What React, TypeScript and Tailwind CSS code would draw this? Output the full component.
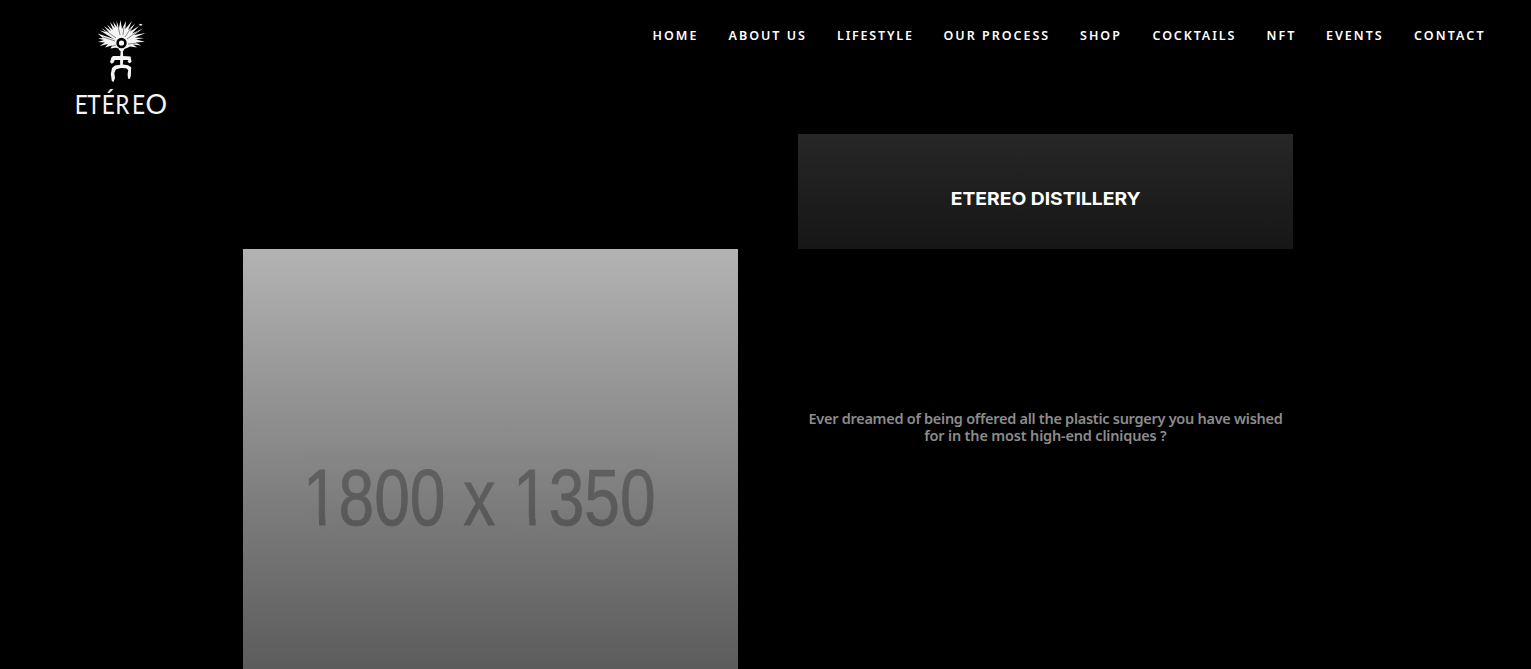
import React from "react";

const links = [
  { label: "HOME", cls: "w-[76px]" },
  { label: "ABOUT US", cls: "w-[108.5px]" },
  { label: "LIFESTYLE", cls: "w-[106.5px] tracking-[1.8px]" },
  { label: "OUR PROCESS", cls: "w-[136.5px]" },
  { label: "SHOP", cls: "w-[72.5px]" },
  { label: "COCKTAILS", cls: "w-[114px] tracking-[1.9px]" },
  { label: "NFT", cls: "w-[59.5px]" },
  { label: "EVENTS", cls: "w-[88px]" },
  { label: "CONTACT", cls: "w-[74px] tracking-[2.1px]" },
];

function Logo() {
  return (
    <svg className="block h-[106px] w-[106px] shrink-0" viewBox="69 18 106 106" fill="#f4f4f4">
      {/* feathers */}
      <path d="M117 40 L97.5 33.5 L103 38 L98 38.5 L104 40 L98 42 L105 42.5 L99.5 46 L108 44 L105 47.5 L112 45.5 L110.5 48.5 L117 47.5 Z" />
      <path d="M117 41 L100 30.5 L106 32 L101 28 L109 32.5 L104 26 L111 31 L107 24.5 L113 30 L110 22 L115 28 L113 21.5 L117 27 L116.5 20.5 L119 28 L120.5 20 L122 29 L126 21 L125.3 29 L132 21 L128 30 L135 23.5 L130 31.5 L139 26 L132 33.5 L143 28.5 L134 35 L145.5 33 L135 37.5 L144 38 L136 39.5 L145 41.8 L136 42.5 L141 45.5 L133 44.5 L137 47.5 L130 46.5 L127 48 L121.5 50 L116 47.5 Z" />
      <path d="M138.5 25 L140.5 23.8 L142.7 24.7 L141 25.8 Z" />
      <g stroke="#000" strokeWidth=".45" fill="none">
        <path d="M116 38 L105 30 M120 35 L118 26 M123 35 L124 27 M125 37 L131 28 M127 39 L138 31 M115 41 L103 37 M128 44 L138 43 M116 45 L109 47" />
      </g>
      <circle cx="121.5" cy="43" r="3.9" fill="#fff" stroke="#000" strokeWidth="2.6" />
      {/* figure */}
      <path d="M118.5 49 H124.5 L122.9 51.5 L123.2 56 L130.5 56.5 L131.3 60 L131.5 62 L129.3 63.3 L127.5 61.5 L128.5 60 L123.2 60 L122.8 64.5 L128 65.2 L131.2 67.3 L130.8 76 L129.8 79 L128 78.5 L127.6 74 L128.3 70 L126 68.2 L121 68 L116 69.3 L114.3 73 L115 78 L113.5 82 L111.8 81 L110.8 74 L112 68 L115 65.4 L120.2 64.8 L120.1 60 L114.8 60 L113.4 62.8 L111.6 63.8 L110 62 L111.6 57.3 L113 56 L120.2 56 L120.7 51.5 Z" />
      <g fontFamily="Lato" fontSize="27">
        <text transform="translate(0 114) scale(.84 1)" x="89 103.8 121 137.2 157" y="0">
          ETÉRE
        </text>
        <text x="145.5" y="114">
          O
        </text>
      </g>
    </svg>
  );
}

function Placeholder() {
  return (
    <div className="mt-[116px] h-[420px] w-[495px] bg-linear-to-b from-[#b3b3b3] to-[#5c5c5c]">
      <svg className="block h-full w-full" viewBox="243 249 495 420">
        <defs>
          {/* trims the foot of each "1" */}
          <clipPath id="digits">
            <path d="M243 440 H738 V517.5 H243 Z M319 517 H325.5 V530 H319 Z M337.5 517 H513 V530 H337.5 Z M529.2 517 H535.7 V530 H529.2 Z M548 517 H738 V530 H548 Z" />
          </clipPath>
        </defs>
        <g clipPath="url(#digits)" opacity=".27">
          <text
            transform="translate(302.9 524.5) scale(.806 1)"
            fontFamily="Liberation Sans, sans-serif"
            fontSize="79.5"
            fill="#000"
            stroke="#000"
            strokeWidth=".8"
          >
            1800 x 1350
          </text>
        </g>
      </svg>
    </div>
  );
}

export default function App() {
  return (
    <div className="flex h-[669px] w-full flex-col overflow-hidden bg-black text-white">
      <header className="flex h-[133px] shrink-0 items-start justify-between pt-[18px] pr-[43px] pl-[69px]">
        <Logo />
        <nav className="flex pt-2 font-['Noto_Sans'] text-[12.5px] leading-[20px] font-semibold tracking-[2px] whitespace-nowrap">
          {links.map((l) => (
            <a key={l.label} href="#" className={l.cls}>
              {l.label}
            </a>
          ))}
        </nav>
      </header>
      <main className="ml-[243px] flex gap-[60px]">
        <Placeholder />
        <section className="w-[495px] pt-[0.5px] text-center">
          <div className="flex h-[115px] items-center justify-center bg-linear-to-b from-[#272727] to-[#161616] pt-[16px]">
            <h1 className="scale-x-[1.07] font-[Inter] text-[18px] leading-[24px] font-bold">ETEREO DISTILLERY</h1>
          </div>
          <p className="mt-[161px] font-['Noto_Sans'] text-[14.5px] leading-[17.5px] font-semibold tracking-[-0.275px] whitespace-nowrap text-[#8c8c8c]">
            Ever dreamed of being offered all the plastic surgery you have wished
            <br />
            <span className="tracking-[-0.18px]">for in the most high-end cliniques ?</span>
          </p>
        </section>
      </main>
    </div>
  );
}
